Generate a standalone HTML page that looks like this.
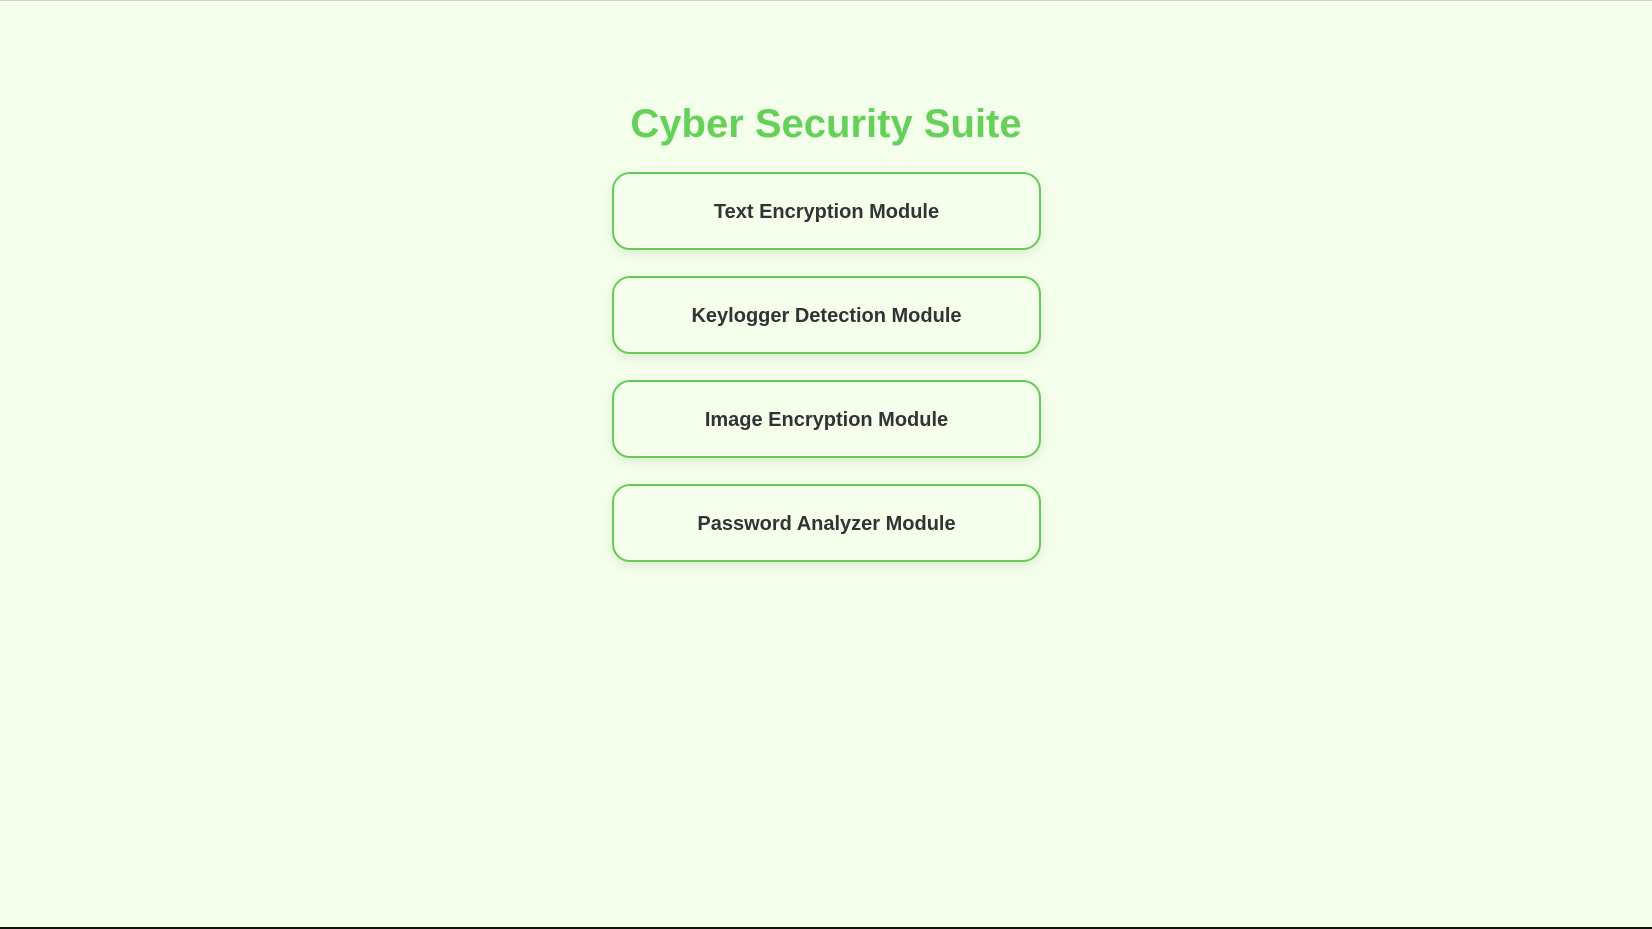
<!DOCTYPE html>
<html><head><meta charset="utf-8"><style>
html,body{margin:0;padding:0;}
body{width:1652px;height:929px;background:#f3ffeb;position:relative;overflow:hidden;font-family:"Liberation Sans",Arial,sans-serif;}
.top{position:absolute;left:0;top:0;width:100%;height:1px;background:#cfcfcf;}
.bot{position:absolute;left:0;bottom:0;width:100%;height:2px;background:#111;}
h1{position:absolute;left:0;width:100%;top:99px;margin:0;text-align:center;font-size:40px;line-height:50px;font-weight:bold;color:#66d05a;}
.btn{position:absolute;left:612px;width:425px;height:74px;border:2px solid #66cc55;border-radius:18px;background:#f4ffec;box-shadow:0 4px 10px rgba(0,0,0,0.08);display:flex;align-items:center;justify-content:center;font-size:20px;font-weight:bold;color:#333;padding-top:2px;box-sizing:content-box;}
.btn{height:72px;}
</style></head><body>
<div class="top"></div>
<h1>Cyber Security Suite</h1>
<div class="btn" style="top:172px">Text Encryption Module</div>
<div class="btn" style="top:276px">Keylogger Detection Module</div>
<div class="btn" style="top:380px">Image Encryption Module</div>
<div class="btn" style="top:484px">Password Analyzer Module</div>
<div class="bot"></div>
</body></html>
